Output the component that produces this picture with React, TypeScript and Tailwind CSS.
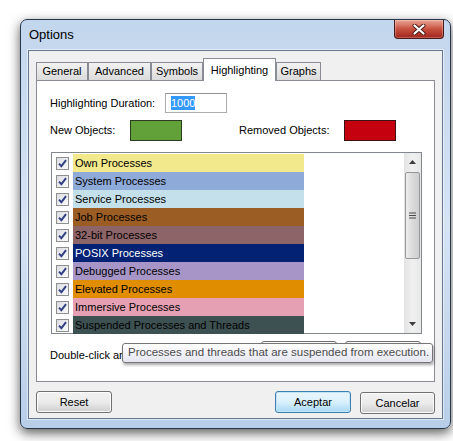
import React from 'react';

const rows = [
  { label: 'Own Processes', bg: 'bg-[#f2e98c]', text: 'text-black' },
  { label: 'System Processes', bg: 'bg-[#8eaad8]', text: 'text-black' },
  { label: 'Service Processes', bg: 'bg-[#c4e0ea]', text: 'text-black' },
  { label: 'Job Processes', bg: 'bg-[#9c5d24]', text: 'text-black' },
  { label: '32-bit Processes', bg: 'bg-[#8d6467]', text: 'text-black' },
  { label: 'POSIX Processes', bg: 'bg-[#032273]', text: 'text-white' },
  { label: 'Debugged Processes', bg: 'bg-[#a795c7]', text: 'text-black' },
  { label: 'Elevated Processes', bg: 'bg-[#e18d00]', text: 'text-black' },
  { label: 'Immersive Processes', bg: 'bg-[#e5a1b3]', text: 'text-black' },
  { label: 'Suspended Processes and Threads', bg: 'bg-[#3d5153]', text: 'text-black' },
];

const tabs = [
  { label: 'General', w: 'w-[52px]' },
  { label: 'Advanced', w: 'w-[63px]' },
  { label: 'Symbols', w: 'w-[52px]' },
  { label: 'Highlighting', w: 'w-[73px]', active: true },
  { label: 'Graphs', w: 'w-[45px]' },
];

function Checkbox() {
  return (
    <div className="w-[13px] h-[13px] border border-[#8e8f8f] bg-gradient-to-br from-[#dcdde2] to-[#fbfbfc] flex items-center justify-center shrink-0">
      <svg width="9" height="9" viewBox="0 0 9 9">
        <path d="M1 4.6 L3.4 7.2 L8 1.2" fill="none" stroke="#2f3f82" strokeWidth="1.9" />
      </svg>
    </div>
  );
}

function Button({ label, w = 'w-[76px]', focus = false }: { label?: string; w?: string; focus?: boolean }) {
  return (
    <button
      className={
        w +
        ' h-[22px] rounded-[3px] border text-[11px] text-black ' +
        (focus
          ? 'border-[#3c7fb1] bg-gradient-to-b from-[#eaf6fd] via-[#d9f0fc] to-[#a7d9f5] shadow-[inset_0_0_0_1px_#c3e4f6]'
          : 'border-[#707070] bg-gradient-to-b from-[#f2f2f2] via-[#ebebeb] to-[#cfcfcf] shadow-[inset_0_0_0_1px_#fcfcfc]')
      }
    >
      {label}
    </button>
  );
}

export default function App() {
  return (
    <div className="min-h-screen bg-white pl-[20px] pt-[19px]" style={{ fontFamily: '"Liberation Sans", Arial, sans-serif' }}>
      <div className="w-[431px] h-[410px] rounded-[7px] border border-[#27374a] bg-gradient-to-b from-[#c2d6ed] via-[#d6e4f4] to-[#b8cee8] shadow-[0_4px_12px_rgba(0,0,0,0.65)] px-[7px] flex flex-col">
        {/* title bar */}
        <div className="h-[30px] flex items-start justify-between">
          <span className="self-center pl-[1px] text-[13px] text-black">Options</span>
          <div className="mr-[-1px] w-[50px] h-[19px] rounded-b-[4px] border border-t-0 border-[#4a1a16] bg-gradient-to-b from-[#e8a697] via-[#c8503f] to-[#a0241b] flex items-center justify-center shadow-[inset_0_0_0_1px_rgba(255,255,255,0.25)]">
            <svg width="14" height="11" viewBox="0 0 14 11">
              <path d="M2.5 1.5 L11.5 9.5 M11.5 1.5 L2.5 9.5" stroke="#4a1a16" strokeWidth="4" strokeLinecap="round" />
              <path d="M2.5 1.5 L11.5 9.5 M11.5 1.5 L2.5 9.5" stroke="#ffffff" strokeWidth="2.2" strokeLinecap="round" />
            </svg>
          </div>
        </div>

        {/* client area */}
        <div className="w-[415px] h-[369px] border border-[#66788f] bg-[#f0f0f0] px-[7px] pt-[7px] flex flex-col shadow-[0_0_0_1px_rgba(255,255,255,0.5)]">
          <div className="h-[22px] flex items-end">
            {tabs.map((t) =>
              t.active ? (
                <div
                  key={t.label}
                  className={t.w + ' relative z-10 h-[23px] -mb-px border border-b-0 border-[#898c95] bg-white flex items-start justify-center pt-[3px] text-[11px] text-black'}
                >
                  {t.label}
                </div>
              ) : (
                <div
                  key={t.label}
                  className={t.w + ' h-[18px] border border-b-0 border-[#898c95] bg-gradient-to-b from-[#f2f2f2] to-[#dbdbdb] flex items-center justify-center text-[11px] text-black'}
                >
                  {t.label}
                </div>
              )
            )}
          </div>

          {/* tab panel */}
          <div className="w-[399px] h-[302px] border border-[#898c95] bg-white pl-[13px] pt-[12px] flex flex-col text-[11px] text-black">
            <div className="h-[20px] flex items-center">
              <span className="w-[115px]">Highlighting Duration:</span>
              <div className="w-[62px] h-[20px] border border-[#abadb3] border-t-[#8e9197] flex items-center pl-[5px]">
                <span className="bg-[#3399ff] text-white leading-[14px]">1000</span>
              </div>
            </div>

            <div className="mt-[7px] h-[21px] flex items-center">
              <span className="w-[80px]">New Objects:</span>
              <div className="w-[52px] h-[21px] border border-[#2d3b22] bg-[#62a13a]" />
              <span className="ml-[57px] w-[105px]">Removed Objects:</span>
              <div className="w-[52px] h-[21px] border border-[#3a1214] bg-[#c5000f]" />
            </div>

            <div className="mt-[11px] ml-[1px] w-[371px] h-[182px] border border-[#828790] flex">
              <div className="flex-1 pt-[1px] flex flex-col">
                {rows.map((r) => (
                  <div key={r.label} className="h-[18px] flex items-center shrink-0">
                    <div className="ml-[4px]">
                      <Checkbox />
                    </div>
                    <div className={'ml-[4px] w-[231px] h-full flex items-center pl-[2px] ' + r.bg + ' ' + r.text}>
                      {r.label}
                    </div>
                  </div>
                ))}
              </div>

              {/* scrollbar */}
              <div className="w-[17px] bg-gradient-to-r from-[#e3e3e3] via-[#f0f0f0] to-[#e8e8e8] flex flex-col items-center">
                <div className="h-[18px] w-full flex items-center justify-center">
                  <svg width="7" height="4" viewBox="0 0 7 4">
                    <path d="M0 4 L3.5 0 L7 4 Z" fill="#3d3d3d" />
                  </svg>
                </div>
                <div className="mt-[1px] w-[15px] h-[87px] rounded-[2px] border border-[#979797] bg-gradient-to-r from-[#eeeeee] via-[#dadada] to-[#cfcfcf] flex items-center justify-center">
                  <svg width="7" height="7" viewBox="0 0 7 7">
                    <path d="M0 1 H7 M0 3.5 H7 M0 6 H7" stroke="#4a4a4a" strokeWidth="1.2" />
                  </svg>
                </div>
                <div className="flex-1" />
                <div className="h-[18px] w-full flex items-center justify-center">
                  <svg width="7" height="4" viewBox="0 0 7 4">
                    <path d="M0 0 L3.5 4 L7 0 Z" fill="#3d3d3d" />
                  </svg>
                </div>
              </div>
            </div>

            <div className="relative mt-[9px] h-[22px] flex items-center">
              <span className="w-[72px] mt-[3px] overflow-hidden whitespace-nowrap">Double-click ar</span>
              <div className="ml-[139px]">
                <Button />
              </div>
              <div className="ml-[8px]">
                <Button />
              </div>
              <div
                className="absolute left-[72px] top-0 w-[311px] h-[20px] rounded-[3px] border border-[#767676] bg-gradient-to-b from-[#ffffff] to-[#e4e5f0] shadow-[1px_2px_3px_rgba(0,0,0,0.35)] flex items-center pl-[5px] text-[11.5px] text-[#4c4c4c] whitespace-nowrap"
              >
                Processes and threads that are suspended from execution.
              </div>
            </div>
          </div>

          {/* dialog buttons */}
          <div className="mt-[8px] flex items-center">
            <Button label="Reset" />
            <div className="flex-1" />
            <Button label="Aceptar" focus />
            <div className="ml-[9px]">
              <Button label="Cancelar" w="w-[75px]" />
            </div>
          </div>
        </div>
      </div>
    </div>
  );
}
